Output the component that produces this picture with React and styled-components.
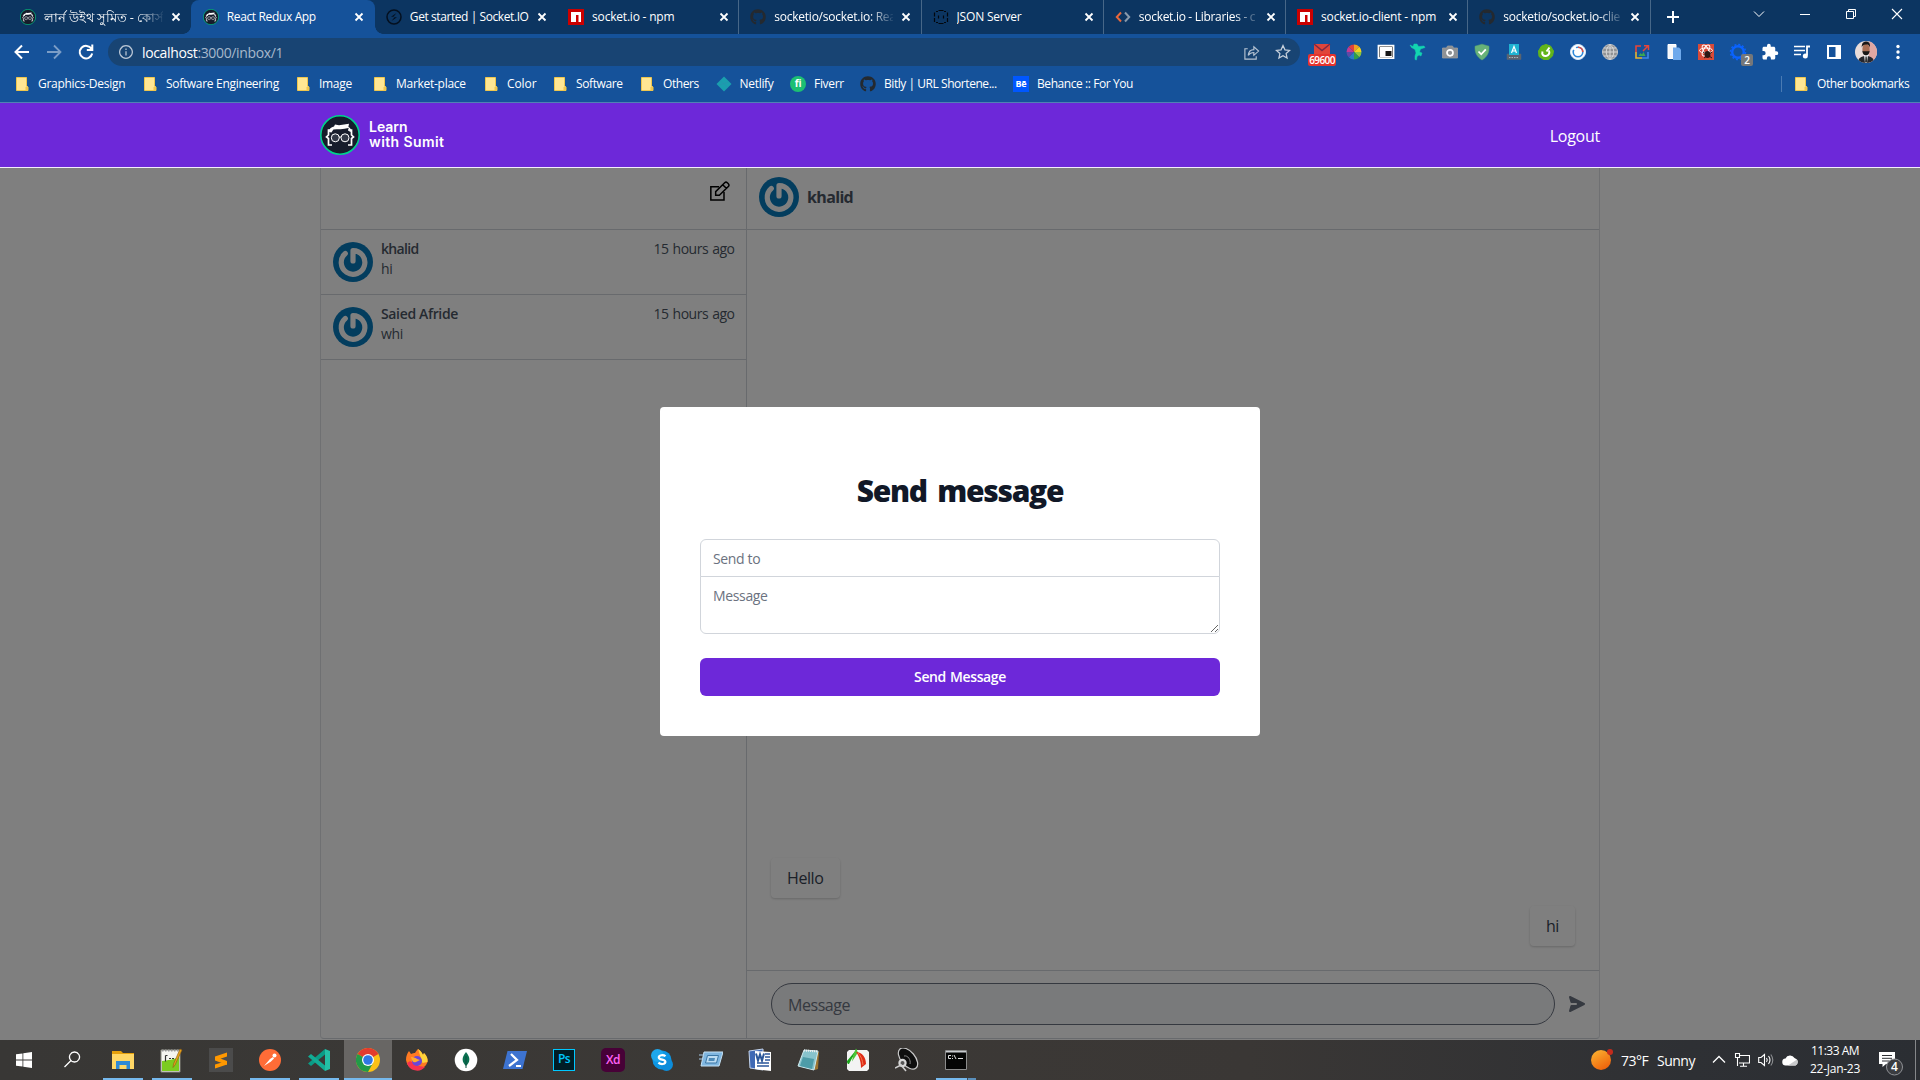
import React from "react";
import styled, { createGlobalStyle, css } from "styled-components";
import { FaGithub } from "react-icons/fa";

const UI_FONT = `"Open Sans", "Noto Sans", sans-serif`;

const GlobalStyle = createGlobalStyle`
  * { box-sizing: border-box; }
  body { margin: 0; background: #fff; font-family: ${UI_FONT}; overflow: hidden; }
  svg { display: block; flex: none; }
  input, textarea, button { font-family: inherit; margin: 0; }
`;

const Screen = styled.div`
  width: 1920px;
  height: 1080px;
  display: flex;
  flex-direction: column;
  overflow: hidden;
`;

/* ---------- browser chrome ---------- */

const TabStrip = styled.div`
  height: 34px;
  background: #0c3561;
  display: flex;
  padding-left: 9px;
`;

const TabItem = styled.div`
  width: ${(p) => (p.$active ? 183.6 : 182.25)}px;
  height: 34px;
  display: flex;
  align-items: center;
  padding-left: ${(p) => (p.$active ? 11.5 : 11)}px;
  position: relative;
  color: #fff;
  font-size: 12px;
  ${(p) =>
    p.$active &&
    css`
      background: #15529a;
      border-radius: 8px 8px 0 0;
      &::before,
      &::after {
        content: "";
        position: absolute;
        bottom: 0;
        width: 8px;
        height: 8px;
      }
      &::before {
        left: -8px;
        background: radial-gradient(circle at 0 0, transparent 7.5px, #15529a 8px);
      }
      &::after {
        right: -8px;
        background: radial-gradient(circle at 100% 0, transparent 7.5px, #15529a 8px);
      }
    `}
  ${(p) => p.$divided && css`border-right: 1px solid #476788;`}
`;

const TabTitle = styled.span`
  width: 119px;
  margin-left: 8px;
  margin-right: 8px;
  overflow: hidden;
  white-space: nowrap;
  line-height: 20px;
  letter-spacing: ${(p) => p.$track || -0.2}px;
  font-size: ${(p) => p.$size || 12}px;
  font-weight: ${(p) => p.$weight || 400};
  ${(p) => p.$fade && css`mask-image: linear-gradient(90deg, #000 80%, transparent 102%);`}
`;

const NewTab = styled.div`
  width: 44px;
  display: flex;
  align-items: center;
  justify-content: center;
  margin-right: auto;
`;

const WindowControls = styled.div`
  display: flex;
  height: 28px;
`;

const WindowButton = styled.div`
  width: 46px;
  display: flex;
  align-items: center;
  justify-content: center;
`;

const Toolbar = styled.div`
  height: 36px;
  background: #15529a;
  display: flex;
  align-items: center;
  padding-left: 6px;
`;

const ToolButton = styled.div`
  width: 32px;
  height: 32px;
  display: flex;
  align-items: center;
  justify-content: center;
  position: relative;
`;

const AddressBar = styled.div`
  width: 1192px;
  height: 28px;
  margin: 0 6px;
  padding: 0 9px 0 11px;
  border-radius: 14px;
  background: #184473;
  display: flex;
  align-items: center;
`;

const Url = styled.span`
  flex: 1;
  margin-left: 9px;
  font-size: 14px;
  letter-spacing: -0.36px;
  color: #fff;
`;

const UrlPath = styled.span`
  color: #a6b8cc;
`;

const AddressActions = styled.div`
  display: flex;
  align-items: center;
  gap: 15px;
`;

const Badge = styled.span`
  position: absolute;
  right: ${(p) => p.$right}px;
  top: ${(p) => p.$top}px;
  width: ${(p) => p.$width}px;
  height: 12px;
  border-radius: 2px;
  background: ${(p) => p.$color};
  color: #fff;
  font: 600 10px/12px ${UI_FONT};
  letter-spacing: ${(p) => p.$track || 0}px;
  text-align: center;
  white-space: nowrap;
`;

const BookmarksBar = styled.div`
  height: 33px;
  background: #15529a;
  border-bottom: 1px solid #5081b4;
  display: flex;
  align-items: center;
  padding: 0 11px 4px 16px;
`;

const Bookmark = styled.div`
  width: ${(p) => p.$width}px;
  display: flex;
  align-items: center;
  color: #fff;
  font-size: 12px;
  line-height: 20px;
  white-space: nowrap;
  letter-spacing: ${(p) => p.$track}px;
`;

const BookmarkIcon = styled.span`
  width: ${(p) => (p.$wide ? 24 : 22)}px;
  flex: none;
`;

const OtherBookmarks = styled.div`
  margin-left: auto;
  height: 16px;
  border-left: 1px solid #4a7bb3;
  padding-left: 13px;
  display: flex;
  align-items: center;
`;

/* ---------- web app ---------- */

const AppHeader = styled.header`
  height: 65px;
  background: #6d28d9;
  border-bottom: 1px solid #f3edfc;
  display: flex;
  justify-content: center;
  align-items: center;
`;

const HeaderInner = styled.div`
  width: 1280px;
  display: flex;
  align-items: center;
  justify-content: space-between;
`;

const Brand = styled.div`
  display: flex;
  align-items: center;
`;

const BrandName = styled.div`
  margin-left: 9px;
  padding-bottom: 2px;
  color: #fff;
  font: 600 14px/15px Inter, sans-serif;
`;

const BrandLine = styled.div`
  letter-spacing: ${(p) => p.$track}px;
`;

const LogoutLink = styled.a`
  color: #fff;
  font-size: 16px;
  line-height: 24px;
  letter-spacing: -0.25px;
  padding-top: 1px;
`;

const Viewport = styled.main`
  height: 872px;
  position: relative;
  display: flex;
  justify-content: center;
  align-items: flex-start;
  background: #fff;
`;

const Inbox = styled.div`
  width: 1280px;
  height: 871px;
  display: flex;
  border: 1px solid #dfe1e5;
  border-top: 0;
  border-bottom-color: #d1d5db;
  border-radius: 0 0 4px 4px;
`;

const Conversations = styled.aside`
  width: 426px;
  border-right: 1px solid #d1d5db;
`;

const ListHeader = styled.div`
  height: 62px;
  border-bottom: 1px solid #d1d5db;
  display: flex;
  justify-content: flex-end;
  padding: 13px 16px 0 0;
`;

const ConversationRow = styled.div`
  height: 65px;
  border-bottom: 1px solid #d1d5db;
  display: flex;
  padding: 0 12px;
`;

const AvatarSlot = styled.div`
  padding-top: 12px;
`;

const ConversationText = styled.div`
  flex: 1;
  margin: 9px 0 0 8px;
  font-size: 14px;
  line-height: 20px;
  color: #4b5563;
`;

const ConversationTop = styled.div`
  display: flex;
  justify-content: space-between;
`;

const Sender = styled.span`
  font-weight: 600;
  letter-spacing: ${(p) => p.$track}px;
`;

const Ago = styled.span`
  letter-spacing: -0.5px;
  word-spacing: 1px;
  margin-right: -0.5px;
`;

const Preview = styled.div`
  letter-spacing: -0.3px;
`;

const Chat = styled.section`
  flex: 1;
  display: flex;
  flex-direction: column;
`;

const ChatHeader = styled.div`
  height: 62px;
  border-bottom: 1px solid #d1d5db;
  display: flex;
  padding: 9px 12px;
`;

const ChatName = styled.span`
  margin-left: 8px;
  font-size: 16px;
  font-weight: 700;
  line-height: 40px;
  letter-spacing: -0.65px;
  color: #4b5563;
`;

const Messages = styled.div`
  flex: 1;
  display: flex;
  flex-direction: column;
  justify-content: flex-end;
  gap: 8px;
  padding: 24px;
`;

const Bubble = styled.div`
  align-self: ${(p) => (p.$mine ? "flex-end" : "flex-start")};
  padding: 8px 16px;
  border-radius: 4px;
  box-shadow: 0 1px 3px rgba(0, 0, 0, 0.12), 0 1px 2px rgba(0, 0, 0, 0.08);
  font-size: 16px;
  line-height: 24px;
  letter-spacing: -0.4px;
  color: #374151;
`;

const Composer = styled.div`
  height: 68px;
  border-top: 1px solid #d1d5db;
  display: flex;
  padding: 12px 12px 0 24px;
`;

const ComposerInput = styled.input`
  width: 784px;
  height: 42px;
  border: 1px solid #6b7280;
  border-radius: 21px;
  background: #f3f4f6;
  padding: 1px 16px 0;
  font-size: 16px;
  letter-spacing: -0.45px;
  &::placeholder {
    color: #6b7280;
    opacity: 1;
  }
`;

const SendButton = styled.div`
  margin: 11px 0 0 12px;
  color: #6b7280;
`;

const Backdrop = styled.div`
  position: absolute;
  inset: 0;
  background: rgba(0, 0, 0, 0.5);
  display: flex;
  justify-content: center;
  align-items: flex-start;
  padding-top: 239.4px;
`;

const Modal = styled.div`
  width: 600px;
  padding: 65.5px 40px 40px;
  border-radius: 4px;
  background: #fff;
`;

const ModalTitle = styled.h2`
  margin: 0 0 30px;
  text-align: center;
  font-size: 30px;
  line-height: 36px;
  font-weight: 800;
  letter-spacing: -1.3px;
  word-spacing: 4px;
  color: #111827;
`;

const fieldStyle = css`
  display: block;
  width: 100%;
  border: 1px solid #d1d5db;
  background: #fff;
  padding: 9px 12px 7px;
  font-size: 14px;
  line-height: 20px;
  letter-spacing: -0.35px;
  outline: none;
  &::placeholder {
    color: #6b7280;
    opacity: 1;
  }
`;

const SendTo = styled.input`
  ${fieldStyle}
  height: 38px;
  border-radius: 6px 6px 0 0;
`;

const MessageField = styled.textarea`
  ${fieldStyle}
  height: 58px;
  margin-top: -1px;
  border-radius: 0 0 6px 6px;
  overflow: hidden;
`;

const Submit = styled.button`
  width: 100%;
  height: 38px;
  margin-top: 24px;
  border: 0;
  border-radius: 6px;
  background: #6d28d9;
  color: #fff;
  font-size: 14px;
  font-weight: 600;
  letter-spacing: -0.4px;
  word-spacing: 1px;
`;

/* ---------- taskbar ---------- */

const Taskbar = styled.footer`
  height: 40px;
  background: linear-gradient(90deg, #383735 0, #3c3936 40%, #3a3735 65%, #2e3034 88%, #2b2e33 100%);
  display: flex;
`;

const Launchers = styled.div`
  display: flex;
  width: 99px;
`;

const Pinned = styled.div`
  display: flex;
  gap: 1px;
`;

const TaskItem = styled.div`
  width: 48px;
  height: 40px;
  display: flex;
  align-items: center;
  justify-content: center;
  padding-bottom: 1px;
  position: relative;
  ${(p) => p.$active && css`background: #686664;`}
  ${(p) =>
    p.$open &&
    css`
      &::after {
        content: "";
        position: absolute;
        bottom: 0;
        left: ${p.$active ? 0 : 4}px;
        right: ${p.$active ? 0 : 4}px;
        height: 2px;
        background: ${p.$stacked ? "linear-gradient(90deg, #76b9ed 31px, #3b4a57 31px, #3b4a57 32px, #5a8fbb 32px)" : "#76b9ed"};
      }
    `}
`;

const Tray = styled.div`
  margin-left: auto;
  display: flex;
  align-items: center;
  color: #fff;
`;

const Weather = styled.div`
  width: 121px;
  display: flex;
  align-items: center;
  font-size: 14px;
  letter-spacing: -0.5px;
`;

const Temperature = styled.span`
  width: 36px;
  margin-left: 8px;
  padding-top: 1px;
`;

const Condition = styled.span`
  padding-top: 1px;
`;

const TrayIcons = styled.div`
  display: flex;
  align-items: center;
  gap: 8px;
`;

const Clock = styled.div`
  width: 72px;
  text-align: center;
  font-size: 12px;
  line-height: 18px;
`;

const ClockLine = styled.div`
  letter-spacing: ${(p) => p.$track}px;
`;

const ActionCenter = styled.div`
  width: 37px;
  margin-left: 8px;
  border-right: 1px solid #85878a;
  height: 40px;
  margin-right: 4px;
  padding-top: 10px;
`;

/* ---------- drawings ---------- */

const SumitFace = ({ size }) => (
  <svg width={size} height={size} viewBox="0 0 40 40">
    <circle cx="20" cy="20" r="19.2" fill="#161c2b" stroke="#00d18d" strokeWidth="1.6" />
    <path d="M9 17c0-3 2-5 5-5.500l1-2 4 .8 10-1.600-.6 3.200c2 .8 3 2.500 3 5.100l-2-.5-1-3.500c-5 1.500-11 1-15 1.500l-2 3z" fill="#fff" />
    <path d="M12 15H8.500v5l-2 2 2 1.500V30H12M28 15h3.500v5l2 2-2 1.500V30H28" fill="none" stroke="#fff" strokeWidth="1.700" />
    <circle cx="15.300" cy="22.800" r="4" fill="#333947" stroke="#fff" strokeWidth="1" />
    <circle cx="25" cy="22.800" r="4" fill="#333947" stroke="#fff" strokeWidth="1" />
    <path d="M19 22h2" stroke="#fff" />
  </svg>
);

const Gravatar = () => (
  <svg width="40" height="40" viewBox="0 0 40 40">
    <circle cx="20" cy="20" r="20" fill="#067bbd" />
    <path d="M12.300 11.500A11.800 11.800 0 1 0 20 8.600V19" fill="none" stroke="#fff" strokeWidth="5.200" strokeLinecap="round" strokeLinejoin="round" />
  </svg>
);

const Close = () => (
  <svg width="10" height="10" viewBox="0 0 10 10">
    <path d="M1.500 1.500l7 7M8.500 1.500l-7 7" stroke="#fff" strokeWidth="1.800" />
  </svg>
);

const Npm = () => (
  <svg width="16" height="16" viewBox="0 0 16 16">
    <path fill="#cb0000" d="M0 0h16v16H0z" />
    <path fill="#fff" d="M3 3h10v10h-2.500V6H8v7H3z" />
  </svg>
);

const SocketIo = () => (
  <svg width="16" height="16" viewBox="0 0 16 16">
    <circle cx="8" cy="8" r="7" fill="none" stroke="#04101f" strokeWidth="1.500" />
    <path d="M10.500 4L5 7.700h2.500zM5.500 12L11 8.300H8.500z" fill="#04101f" />
  </svg>
);

const JsonBraces = () => (
  <svg width="16" height="16" viewBox="0 0 16 16" fill="none" stroke="#02070d">
    <path d="M3 2.500h2M11 2.500h2M3 13.500h2M11 13.500h2M5.500 1.500h5M5.500 14.500h5" />
    <path d="M1.500 3.500v4M14.500 3.500v4M1.500 9v4M14.500 9v4M5.500 6.500v3M10.500 6.500v3" strokeWidth="1.200" />
  </svg>
);

const CodeAngles = () => (
  <svg width="16" height="16" viewBox="0 0 16 16">
    <path d="M6 3.500L1.800 8 6 12.500" stroke="#e8683b" strokeWidth="2" fill="none" />
    <path d="M10 3.500L14.200 8 10 12.500" stroke="#8899ab" strokeWidth="2" fill="none" />
  </svg>
);

const Octocat = () => <FaGithub size={16} color="#24292f" />;

const Folder = () => (
  <svg width="13" height="16" viewBox="0 0 13 16">
    <path d="M.5 1.500h10v8.500l1.500 1v3.500H.5z" fill="#ffe693" stroke="#efc64e" />
    <path d="M9.500 14V11l2.500-.5v4z" fill="#efc64e" />
  </svg>
);

const Netlify = () => (
  <svg width="16" height="16" viewBox="0 0 16 16">
    <path d="M8 .5L15.500 8 8 15.500.5 8z" fill="#1a9fae" />
    <path d="M4 4.500l8 7M3 9l10-3" stroke="#2a8fae" strokeWidth=".5" />
  </svg>
);

const LetterBadge = styled.span`
  display: block;
  width: 16px;
  height: 16px;
  border-radius: ${(p) => (p.$round ? "50%" : "0")};
  background: ${(p) => p.$bg};
  color: #fff;
  font: 700 ${(p) => p.$size}px/${(p) => (p.$round ? 15 : 16)}px ${UI_FONT};
  letter-spacing: -0.3px;
  text-align: center;
`;

const Stroke = ({ d, size = 18, color = "#fff", w = 1.5, fill = "none", box = 18, children }) => (
  <svg width={size} height={size} viewBox={`0 0 ${box} ${box}`}>
    <path d={d} fill={fill} stroke={color} strokeWidth={w} />
    {children}
  </svg>
);

const Wheel = () => {
  const colors = ["#f2a01f", "#f4d31c", "#8cc63f", "#2f9e49", "#2b7cc4", "#5c4ba8", "#c13a96", "#e0413a"];
  return (
    <svg width="16" height="16" viewBox="-8 -8 16 16">
      {colors.map((c, i) => {
        const a = (i * Math.PI) / 4 - Math.PI / 2;
        const b = a + Math.PI / 4;
        return <path key={c} fill={c} d={`M0 0L${7.5 * Math.cos(a)} ${7.5 * Math.sin(a)}A7.500 7.500 0 0 1 ${7.5 * Math.cos(b)} ${7.5 * Math.sin(b)}z`} />;
      })}
    </svg>
  );
};

const Gear = () => (
  <svg width="18" height="18" viewBox="0 0 18 18">
    <circle cx="9" cy="9" r="5.800" fill="none" stroke="#0a63ff" strokeWidth="2.400" />
    <circle cx="9" cy="9" r="7.500" fill="none" stroke="#0a63ff" strokeWidth="1.500" strokeDasharray="2 1.930" />
  </svg>
);

const MailIcon = styled.div`
  padding-bottom: 5px;
`;

const extensions = [
  <React.Fragment key="mail">
    <MailIcon>
      <svg width="18" height="14" viewBox="0 0 18 14">
        <path d="M1 1h16v11H1z" fill="#e0453a" />
        <path d="M1 1l8 6.500L17 1" fill="none" stroke="#7c2a45" strokeWidth="1.500" />
      </svg>
    </MailIcon>
    <Badge $color="#e5322d" $width={28} $right={2} $top={18} $track={-0.6}>69600</Badge>
  </React.Fragment>,
  <Wheel key="wheel" />,
  <Stroke key="pip" d="M1.500 2.700h15v12.500h-15z" color="#fff" w={1.800} fill="#222">
    <path d="M3 4h12v10H3z" fill="#fff" />
    <path d="M8.500 8h6v5h-6z" fill="#161616" />
  </Stroke>,
  <Stroke key="dino" d="M1 2l3 1.500 1-2.500h3l1.500 2.500L15 3l1 1.500-4.500 1.500-1 3 2.500 1-1 3-2-1-2 1.500-.5 3.500-1.500-.5V13l1-3L6 6.500 2.500 4.500z" w={0.5} color="#12d5b0" fill="#12d5b0" />,
  <Stroke key="camera" d="M1.500 5h4l1-2h5l1 2h4v10h-15z" color="#9a9a9a" w={0.8} fill="#8f9295">
    <circle cx="9" cy="9.800" r="3" fill="#8f9295" stroke="#fff" strokeWidth="1.700" />
  </Stroke>,
  <Stroke key="guard" d="M9 1.200l7 2c.3 6-1.500 10.500-7 13.800C3.500 13.700 1.700 9.200 2 3.200z" color="#5cab6b" w={0.5} fill="#67b279">
    <path d="M5.500 8.500l2.700 2.800 4.600-5" fill="none" stroke="#fff" strokeWidth="1.800" />
  </Stroke>,
  <Stroke key="keyboard" d="M2 11h14v5.500H2z" color="#5b6470" w={0.5} fill="#5b6470">
    <path d="M4 1h10v11H4z" fill="#1fb3d2" />
    <path d="M6.500 10L9 3.500 11.500 10M7.300 8h3.400" stroke="#fff" strokeWidth="1.200" fill="none" />
    <path d="M4 14.500h10" stroke="#aab2ba" strokeDasharray="1.500 1" />
  </Stroke>,
  <Stroke key="grab" d="M9 1.500l4.500 1.500L16.500 8l-1 5-4 3.500h-5L2 13.500 1.500 8l3-5z" color="#62b51b" w={1} fill="#62b51b">
    <path d="M12.500 4.500L9.500 8.500M5.500 8.500c-1 3 1 4.800 3.500 4.500s4-2.500 3-5.500" stroke="#fff" strokeWidth="2" fill="none" />
  </Stroke>,
  <Stroke key="compass" d="M9 1.500a7.500 7.500 0 1 0 .01 0z" color="#dbe9f8" w={1} fill="#fff">
    <circle cx="9" cy="9" r="4.800" fill="none" stroke="#2d88d9" strokeWidth="1.600" strokeDasharray="17 3" />
    <path d="M9 4.200a4.800 4.800 0 0 1 4.800 4.800" fill="none" stroke="#e14f45" strokeWidth="1.600" />
  </Stroke>,
  <Stroke key="globe" d="M9 1.500a7.500 7.500 0 1 0 .01 0z" color="#c2c2c2" w={1} fill="#8f9193">
    <path d="M1.500 9h15M9 1.500v15M3 5h12M3 13h12M9 1.500c-5 4-5 11 0 15M9 1.500c5 4 5 11 0 15" fill="none" stroke="#d8d8d8" />
  </Stroke>,
  <Stroke key="image" d="M8 3H3v6" color="#e74538" w={1.600}>
    <path d="M3 9v6h6" fill="none" stroke="#e8b42e" strokeWidth="1.600" />
    <path d="M9 15h6V9" fill="none" stroke="#3c86e8" strokeWidth="1.600" />
    <path d="M10 8l5-5M11 2.700h4.500V7" fill="none" stroke="#e74538" strokeWidth="1.500" />
    <path d="M5.500 13l2-3 1.500 1.500L10.500 9l2 4z" fill="#39a852" />
  </Stroke>,
  <Stroke key="pages" d="M3 1.500h8v14H3z" color="#fff" w={1} fill="#f5f7fa">
    <path d="M8 4.500h6l2 2V17H8z" fill="#6ea9ec" />
  </Stroke>,
  <Stroke key="react" d="M1 1h16v16H1z" color="#d94a38" w={0} fill="#d94a38">
    <ellipse cx="9" cy="7.500" rx="6.500" ry="2.500" fill="none" stroke="#fff" />
    <ellipse cx="9" cy="7.500" rx="6" ry="2.500" transform="rotate(60 9 7.500)" fill="none" stroke="#fff" />
    <ellipse cx="9" cy="7.500" rx="6" ry="2.500" transform="rotate(120 9 7.500)" fill="none" stroke="#fff" />
    <ellipse cx="10.500" cy="11.500" rx="3" ry="3.500" fill="#2c1814" />
    <path d="M6 9l9 6M7 15l8-6" stroke="#2c1814" />
  </Stroke>,
  <React.Fragment key="gear">
    <Gear />
    <Badge $color="#757779" $width={12} $right={1} $top={18}>2</Badge>
  </React.Fragment>,
  <Stroke key="puzzle" w={0} box={24} size={18} fill="#fff" d="M20.500 11H19V7c0-1.100-.9-2-2-2h-4V3.500a2.500 2.500 0 0 0-5 0V5H4c-1.100 0-2 .9-2 2v3.800h1.500a2.700 2.700 0 0 1 0 5.400H2V20c0 1.100.9 2 2 2h3.800v-1.500a2.700 2.700 0 0 1 5.400 0V22H17c1.100 0 2-.9 2-2v-4h1.500a2.500 2.500 0 0 0 0-5z" />,
  <Stroke key="queue" d="M1 3.500h11M1 7.500h11M1 11.500h7" w={1.700}>
    <path d="M14 12.500V3.500h3" fill="none" stroke="#fff" strokeWidth="1.800" />
    <circle cx="12.300" cy="13" r="2.500" fill="#fff" />
  </Stroke>,
  <Stroke key="panel" d="M3 3h12v12H3z" w={2}>
    <path d="M10.500 2.500H16v13h-5.500z" fill="#fff" />
  </Stroke>,
  <svg key="profile" width="22" height="22" viewBox="0 0 22 22">
    <clipPath id="profile"><circle cx="11" cy="11" r="11" /></clipPath>
    <g clipPath="url(#profile)">
      <path d="M0 0h22v22H0z" fill="#e9dcd9" />
      <path d="M14 0h8v22h-8z" fill="#e0a7a3" />
      <path d="M3 22c0-5 3-7 8-7s8 2 8 7z" fill="#26262c" />
      <path d="M9 14h4l-1 8h-2z" fill="#f1f1f4" />
      <path d="M10.500 15.500h1.200l.6 6h-2.300z" fill="#333" />
      <ellipse cx="11" cy="8" rx="3.600" ry="5.200" fill="#a96e53" />
      <path d="M6.800 6.500c-.4-4.500 2-6 4.500-6s4.200 2 3.700 6c-.8-2.500-1.800-3-4-3s-3.500.8-4.200 3zM7.400 9.500c1 1.200 2 .8 3.600.8s2.600.4 3.600-.8c0 3.500-1.800 4.800-3.600 4.800s-3.600-1.300-3.600-4.800z" fill="#191717" />
    </g>
  </svg>,
  <svg key="menu" width="18" height="18" viewBox="0 0 18 18">
    <circle cx="9" cy="3.500" r="1.700" fill="#fff" />
    <circle cx="9" cy="9" r="1.700" fill="#fff" />
    <circle cx="9" cy="14.500" r="1.700" fill="#fff" />
  </svg>,
];

const tabs = [
  { title: "লার্ন উইথ সুমিত - কোর্স", icon: <SumitFace size={16} />, fade: true, size: 12.7, weight: 500, track: -0.1 },
  { title: "React Redux App", icon: <SumitFace size={16} />, active: true, track: -0.36 },
  { title: "Get started | Socket.IO", icon: <SocketIo />, track: -0.42 },
  { title: "socket.io - npm", icon: <Npm /> },
  { title: "socketio/socket.io: Rea", icon: <Octocat />, fade: true, track: -0.25 },
  { title: "JSON Server", icon: <JsonBraces /> },
  { title: "socket.io - Libraries - c", icon: <CodeAngles />, fade: true, track: -0.3 },
  { title: "socket.io-client - npm", icon: <Npm /> },
  { title: "socketio/socket.io-clie", icon: <Octocat />, fade: true, track: -0.25 },
];

const bookmarks = [
  { label: "Graphics-Design", width: 128, track: -0.28 },
  { label: "Software Engineering", width: 153, track: -0.31 },
  { label: "Image", width: 77, track: -0.3 },
  { label: "Market-place", width: 111, track: -0.28 },
  { label: "Color", width: 69, track: -0.1 },
  { label: "Software", width: 87, track: -0.4 },
  { label: "Others", width: 74.5, track: -0.4 },
  { label: "Netlify", width: 74.5, track: -0.3, icon: <Netlify /> },
  { label: "Fiverr", width: 70, track: -0.3, icon: <LetterBadge $bg="#1dbf73" $round $size={10}>fi</LetterBadge> },
  { label: "Bitly | URL Shortene...", width: 153, track: -0.45, icon: <Octocat /> },
  { label: "Behance :: For You", width: 140, track: -0.43, icon: <LetterBadge $bg="#0057ff" $size={9}>Bē</LetterBadge> },
];

const AppSquare = styled.span`
  width: ${(p) => p.$size}px;
  height: ${(p) => p.$size}px;
  border: ${(p) => p.$border};
  border-radius: ${(p) => p.$radius}px;
  background: ${(p) => p.$bg};
  color: ${(p) => p.$color};
  font: 600 12px/${(p) => p.$line}px ${UI_FONT};
  letter-spacing: -0.5px;
  text-align: center;
`;

const pinned = [
  { open: true, icon: (
    <svg width="24" height="24" viewBox="0 0 24 24">
      <path d="M1 3h9l2 2h11v15H1z" fill="#e5a00c" />
      <path d="M1 6h22v15H1z" fill="#ffd766" />
      <path d="M5 13h14v8h-3.500v-4h-7v4H5z" fill="#2f8ad6" />
    </svg>) },
  { open: true, icon: (
    <svg width="24" height="26" viewBox="0 0 24 26">
      <path d="M1 3h19v22H1z" fill="#f5f5f0" stroke="#8a8a80" />
      <path d="M2 14c6-1 11-1 17-4v14H2z" fill="#7ccc1f" />
      <path d="M2 3.500h17" stroke="#999" strokeDasharray="1.500 1.500" strokeWidth="2" />
      <path d="M5.500 8.500v6M5.500 8.500h2M9 11.500h2M12 11.500h2" stroke="#333" strokeWidth="1.200" />
      <path d="M22 3l-7 15-2 2.500.5-3.500L20 2z" fill="#e8a21b" stroke="#8b5a12" strokeWidth=".6" />
    </svg>) },
  { icon: (
    <svg width="24" height="24" viewBox="0 0 24 24">
      <path d="M0 0h24v24H0z" fill="#4b4b4b" />
      <path d="M18 4.500v4l-12 4v-4zM6 8.500l12 4.500v4L6 12.500zM18 13v3.500l-12 4v-4z" fill="#ff9800" />
    </svg>) },
  { open: true, icon: (
    <svg width="22" height="22" viewBox="0 0 22 22">
      <circle cx="11" cy="11" r="11" fill="#ff6c37" />
      <path d="M5 17l6-7 3-2 1 1.500-3 3z" fill="#fff" />
      <circle cx="15.500" cy="6.500" r="2" fill="#fff" />
    </svg>) },
  { open: true, icon: (
    <svg width="24" height="24" viewBox="0 0 24 24">
      <path d="M18 1l5 2v18l-5 2z" fill="#24bfa5" />
      <path d="M18 1v5.500L4 18l-3-2.500z" fill="#0a9c86" />
      <path d="M18 23v-5.500L4 6 1 8.500z" fill="#12ac95" />
    </svg>) },
  { open: true, active: true, icon: (
    <svg width="24" height="24" viewBox="0 0 24 24">
      <circle cx="12" cy="12" r="12" fill="#fbc116" />
      <path d="M12 12L1.600 6A12 12 0 0 1 22.400 6z" fill="#e33b2e" />
      <path d="M12 12L1.600 6A12 12 0 0 0 12 24l5-9z" fill="#229a48" />
      <circle cx="12" cy="12" r="6" fill="#fff" />
      <circle cx="12" cy="12" r="4.800" fill="#3077e3" />
    </svg>) },
  { icon: (
    <svg width="24" height="24" viewBox="0 0 24 24">
      <path d="M13 1c3 2 4 4 5 6l1-2c3 3 4 6 3.500 9A11 11 0 0 1 1 12c0-4 1-6 3-9l2 3c2-1 3-1 4-1 1-2 2-3 3-4z" fill="#ff7a22" />
      <path d="M13 1c3 2 4 4 5 6l1-2c3 3 4 6 3.500 9l-5 1z" fill="#ffd33a" />
      <path d="M2 15a10.500 10.500 0 0 0 18 4l-6-1-9-5z" fill="#f6334f" />
      <circle cx="12" cy="13" r="5" fill="#6a47d8" />
      <path d="M6 9c3 0 5 1 6 2l3 1-4 2c-3 1-4-1-5-5z" fill="#ffab2d" />
    </svg>) },
  { icon: (
    <svg width="24" height="24" viewBox="0 0 24 24">
      <circle cx="12" cy="12" r="11.300" fill="#fff" />
      <path d="M12 4c5 6 4 10 0 14-4-4-5-8 0-14z" fill="#0a7050" />
      <path d="M12 8v12" stroke="#0a4f3c" />
    </svg>) },
  { icon: (
    <svg width="24" height="20" viewBox="0 0 24 20">
      <path d="M4.500 1H24l-4.500 18H0z" fill="#3d73d0" />
      <path d="M8 4l6 6-8 6M13 16h5" fill="none" stroke="#fff" strokeWidth="2.200" />
    </svg>) },
  { icon: <AppSquare $size={22} $border="1.500px solid #00c8ff" $radius={0} $bg="#001d26" $color="#00c8ff" $line={18}>Ps</AppSquare> },
  { icon: <AppSquare $size={24} $border="0" $radius={5} $bg="#470137" $color="#ff61f6" $line={23}>Xd</AppSquare> },
  { icon: (
    <svg width="22" height="22" viewBox="0 0 22 22">
      <circle cx="11" cy="11" r="9.500" fill="#0d96e3" />
      <circle cx="6.500" cy="6.500" r="6.500" fill="#1ea7ec" />
      <circle cx="15.500" cy="15.500" r="6.500" fill="#0d8ddb" />
      <path d="M14.500 7.300c-2-1.800-7-1.500-6.700 1.300.3 2.600 6.500 1.500 6.600 4.200 0 2.700-4.800 2.900-7 .8" fill="none" stroke="#fff" strokeWidth="2.200" />
    </svg>) },
  { icon: (
    <svg width="24" height="18" viewBox="0 0 24 18">
      <path d="M5 1h19l-4 14H2z" fill="#7fb6e0" stroke="#c6e2f5" />
      <path d="M8.500 4.500h11l-2 7.500h-11z" fill="#bcdcf2" stroke="#3b77a6" />
      <path d="M10 7h6l-.7 3H9.400z" fill="#4d8ab8" />
      <path d="M0 4h5M0 8h4" stroke="#a8cbe6" />
    </svg>) },
  { icon: (
    <svg width="24" height="24" viewBox="0 0 24 24">
      <path d="M1 3l14-2v21L2 20z" fill="#3e69b5" stroke="#c5d5ee" />
      <path d="M7 3l16 1v19L7 21z" fill="#fff" />
      <path d="M8 5.500l2 7 2-6 2 6 2-7" fill="none" stroke="#2b579a" strokeWidth="2" />
      <path d="M17 6h5M17 9h5M17 12h5M9 15h12M9 18h12" stroke="#2b579a" strokeWidth="1.400" />
    </svg>) },
  { icon: (
    <svg width="24" height="22" viewBox="0 0 24 22">
      <path d="M7 2l15 1-1 17-3 1z" fill="#9b7431" />
      <path d="M7 1l14 1-4 19-16-4z" fill="#87c3cc" stroke="#cfeaee" />
      <path d="M6 8l11 2-2 10-12-3z" fill="#4d9ca8" />
      <path d="M7 1.500l14 1" stroke="#eee" strokeWidth="2" strokeDasharray="1 1" />
    </svg>) },
  { icon: (
    <svg width="22" height="24" viewBox="0 0 22 24">
      <path d="M2 2h18l2 2v17l-2 2H2l-2-2V4z" fill="#f3f3f3" />
      <path d="M10 1L0 13c0 3 1 3 2 3 3-6 5-9 8-14z" fill="#1ca51b" />
      <path d="M9 .5l2 4-6 9c1-6 2-9 4-13z" fill="#4cc636" />
      <path d="M9 4c6 0 10 5 10 12l-5 4C14 13 12 8 9 4z" fill="#e02c17" />
      <path d="M11 5c3 3 4.500 7 5 12" stroke="#f27a52" fill="none" />
    </svg>) },
  { icon: (
    <svg width="24" height="24" viewBox="0 0 24 24">
      <ellipse cx="13" cy="10.500" rx="12.500" ry="7" transform="rotate(50 13 10.500)" fill="#0e0e0e" stroke="#c8c8c8" strokeWidth="1.200" />
      <path d="M9 8c4-1 7 4 6 8" stroke="#888" fill="none" />
      <circle cx="7.500" cy="15" r="4.200" fill="#d8d8d8" />
      <circle cx="7.500" cy="15" r="2" fill="#555" />
      <path d="M0 20l6-3 5 6" stroke="#cfcfcf" strokeWidth="1.500" fill="none" />
    </svg>) },
  { open: true, stacked: true, icon: (
    <svg width="22" height="20" viewBox="0 0 22 20">
      <path d="M.5.5h21v19H.5z" fill="#050505" stroke="#8c8c8c" />
      <path d="M1 1h20v1.500H1z" fill="#c9ccd0" />
      <path d="M6 5.500H3.500v3H6M7.500 5.500v1M7.500 8v1M9 5l2 4M13 8.500h5" stroke="#ddd" fill="none" />
    </svg>) },
];

const conversations = [
  { name: "khalid", text: "hi", track: -0.65 },
  { name: "Saied Afride", text: "whi", track: -0.35 },
];

export default function App() {
  return (
    <Screen>
      <GlobalStyle />
      <TabStrip>
        {tabs.map((t, i) => (
          <TabItem key={i} $active={t.active} $divided={i > 2}>
            {t.icon}
            <TabTitle $track={t.track} $fade={t.fade} $size={t.size} $weight={t.weight}>{t.title}</TabTitle>
            <Close />
          </TabItem>
        ))}
        <NewTab>
          <Stroke d="M6 0v12M0 6h12" size={12} box={12} w={2} />
        </NewTab>
        <WindowControls>
          <WindowButton><Stroke d="M1 3.500l5 5 5-5" size={12} box={12} w={1} /></WindowButton>
          <WindowButton><Stroke d="M1 6.500h10" size={12} box={12} w={1} /></WindowButton>
          <WindowButton><Stroke d="M1.500 3.500h7v7h-7zM3.500 3.500v-2h7v7h-2" size={12} box={12} w={1} /></WindowButton>
          <WindowButton><Stroke d="M1 1l10 10M11 1L1 11" size={12} box={12} w={1.1} /></WindowButton>
        </WindowControls>
      </TabStrip>

      <Toolbar>
        <ToolButton><Stroke d="M16 9H3M9 2.500L2.500 9 9 15.500" w={2} /></ToolButton>
        <ToolButton><Stroke d="M2 9h13M9 2.500L15.500 9 9 15.500" w={1.800} color="#7b9dc6" /></ToolButton>
        <ToolButton><Stroke d="M14.500 6A6.300 6.300 0 1 0 15.200 10.500M15.300 1.500V7H9.800" w={2} /></ToolButton>
        <AddressBar>
          <Stroke d="M7 .7a6.300 6.300 0 1 0 .01 0zM7 6.200V10.500M7 3.500V5" size={14} box={14} w={1.300} color="#b7c4d3" />
          <Url>localhost<UrlPath>:3000/inbox/1</UrlPath></Url>
          <AddressActions>
            <Stroke d="M5 5H2v11h12v-3M5.500 12c.5-4 3-6 6-6V3l5 4.500-5 4.500V9c-3 0-4.500.8-6 3z" w={1.200} size={17} color="#b7c4d3" />
            <Stroke d="M9 1.800l2.200 4.800 5.200.6-3.900 3.500 1.100 5.200L9 13.300l-4.600 2.600 1.100-5.200L1.600 7.200l5.200-.6z" w={1.400} size={16} color="#c6d0dc" />
          </AddressActions>
        </AddressBar>
        {extensions.map((e, i) => (
          <ToolButton key={i}>{e}</ToolButton>
        ))}
      </Toolbar>

      <BookmarksBar>
        {bookmarks.map((b) => (
          <Bookmark key={b.label} $width={b.width} $track={b.track}>
            <BookmarkIcon $wide={!!b.icon}>{b.icon || <Folder />}</BookmarkIcon>
            {b.label}
          </Bookmark>
        ))}
        <OtherBookmarks>
          <Bookmark $width={114} $track={-0.42}>
            <BookmarkIcon><Folder /></BookmarkIcon>
            Other bookmarks
          </Bookmark>
        </OtherBookmarks>
      </BookmarksBar>

      <AppHeader>
        <HeaderInner>
          <Brand>
            <SumitFace size={40} />
            <BrandName>
              <BrandLine $track={0}>Learn</BrandLine>
              <BrandLine $track={0.4}>with Sumit</BrandLine>
            </BrandName>
          </Brand>
          <LogoutLink>Logout</LogoutLink>
        </HeaderInner>
      </AppHeader>

      <Viewport>
        <Inbox>
          <Conversations>
            <ListHeader>
              <svg width="20" height="20" viewBox="0 0 60 60" fill="none" stroke="#000" strokeWidth="4.500">
                <path d="M27 17.500H2.500V57H42V33" />
                <path d="M17 43V32L44 5.500q4-4 8 0l3 3q4 4 0 8L28 43zM38 11l11 11" />
              </svg>
            </ListHeader>
            {conversations.map((c) => (
              <ConversationRow key={c.name}>
                <AvatarSlot><Gravatar /></AvatarSlot>
                <ConversationText>
                  <ConversationTop>
                    <Sender $track={c.track}>{c.name}</Sender>
                    <Ago>15 hours ago</Ago>
                  </ConversationTop>
                  <Preview>{c.text}</Preview>
                </ConversationText>
              </ConversationRow>
            ))}
          </Conversations>
          <Chat>
            <ChatHeader>
              <Gravatar />
              <ChatName>khalid</ChatName>
            </ChatHeader>
            <Messages>
              <Bubble>Hello</Bubble>
              <Bubble $mine>hi</Bubble>
            </Messages>
            <Composer>
              <ComposerInput placeholder="Message" />
              <SendButton>
                <svg width="20" height="20" viewBox="0 0 20 20">
                  <path transform="rotate(90 10 10)" fill="currentColor" d="M10.894 2.553a1 1 0 00-1.788 0l-7 14a1 1 0 001.169 1.409l5-1.429A1 1 0 009 15.571V11a1 1 0 112 0v4.571a1 1 0 00.725.962l5 1.428a1 1 0 001.170-1.408l-7-14z" />
                </svg>
              </SendButton>
            </Composer>
          </Chat>
        </Inbox>
        <Backdrop>
          <Modal>
            <ModalTitle>Send message</ModalTitle>
            <SendTo placeholder="Send to" />
            <MessageField placeholder="Message" />
            <Submit>Send Message</Submit>
          </Modal>
        </Backdrop>
      </Viewport>

      <Taskbar>
        <Launchers>
          <TaskItem>
            <svg width="16" height="16" viewBox="0 0 16 16" fill="#fff">
              <path d="M0 2.300L6.500 1.400V7.600H0zM7.300 1.300L16 0v7.600H7.300zM0 8.400h6.500v6.200L0 13.700zM7.300 8.400H16V16l-8.700-1.300z" />
            </svg>
          </TaskItem>
          <TaskItem>
            <Stroke d="M10.500 1a5 5 0 1 0 .01 0zM7 9.500L0.500 16" size={17} box={17} w={1.300} />
          </TaskItem>
        </Launchers>
        <Pinned>
          {pinned.map((p, i) => (
            <TaskItem key={i} $open={p.open} $active={p.active} $stacked={p.stacked}>{p.icon}</TaskItem>
          ))}
        </Pinned>
        <Tray>
          <Weather>
            <svg width="22" height="22" viewBox="0 0 22 22">
              <defs>
                <linearGradient id="sun" x1="0" y1="0" x2=".6" y2="1">
                  <stop offset="0" stopColor="#fbb833" />
                  <stop offset="1" stopColor="#f0640c" />
                </linearGradient>
              </defs>
              <circle cx="10" cy="11" r="10" fill="url(#sun)" />
              <circle cx="19" cy="3" r="3" fill="#c42b1c" />
            </svg>
            <Temperature>73°F</Temperature>
            <Condition>Sunny</Condition>
          </Weather>
          <TrayIcons>
            <Stroke d="M1 9.500L7 3.500l6 6" size={14} box={14} w={1.300} />
            <Stroke d="M5.500 3.500H15.500v7.500H5M1.500 1.500h4v4h-4zM3.500 5.500v8.500M9.500 11v3M6 14.200h7" size={16} box={16} w={1.100} />
            <svg width="16" height="16" viewBox="0 0 16 16" fill="none" stroke="#fff" strokeWidth="1.100">
              <path d="M.7 5.500h2.300L6.500 2.500v11L3 10.500H.7zM8.500 6q1.500 2 0 4M10.500 4q3 4 0 8" />
              <path d="M12.800 2.500q4 5.500 0 11" stroke="#8b8d90" />
            </svg>
            <svg width="17" height="12" viewBox="0 0 17 12">
              <path d="M4 11.500a3.500 3.500 0 0 1-.5-7A5 5 0 0 1 12.500 4a4 4 0 0 1 1 7.500z" fill="#fff" />
              <path d="M6 11.500l9-6a4 4 0 0 1-1.500 6z" fill="#c9cacc" />
            </svg>
          </TrayIcons>
          <Clock>
            <ClockLine $track={-0.5}>11:33 AM</ClockLine>
            <ClockLine $track={-0.25}>22-Jan-23</ClockLine>
          </Clock>
          <ActionCenter>
            <svg width="26" height="28" viewBox="0 0 26 28">
              <path d="M0 2h16v12H7l-3.500 3v-3H0z" fill="#fff" />
              <path d="M3 5.500h10M3 8.300h10M3 11h7" stroke="#2e3034" />
              <circle cx="15.500" cy="17" r="8" fill="#3a3c40" stroke="#909296" />
              <text x="15.500" y="21.300" textAnchor="middle" fill="#fff" fontFamily="Open Sans, sans-serif" fontSize="12" fontWeight="600">4</text>
            </svg>
          </ActionCenter>
        </Tray>
      </Taskbar>
    </Screen>
  );
}
